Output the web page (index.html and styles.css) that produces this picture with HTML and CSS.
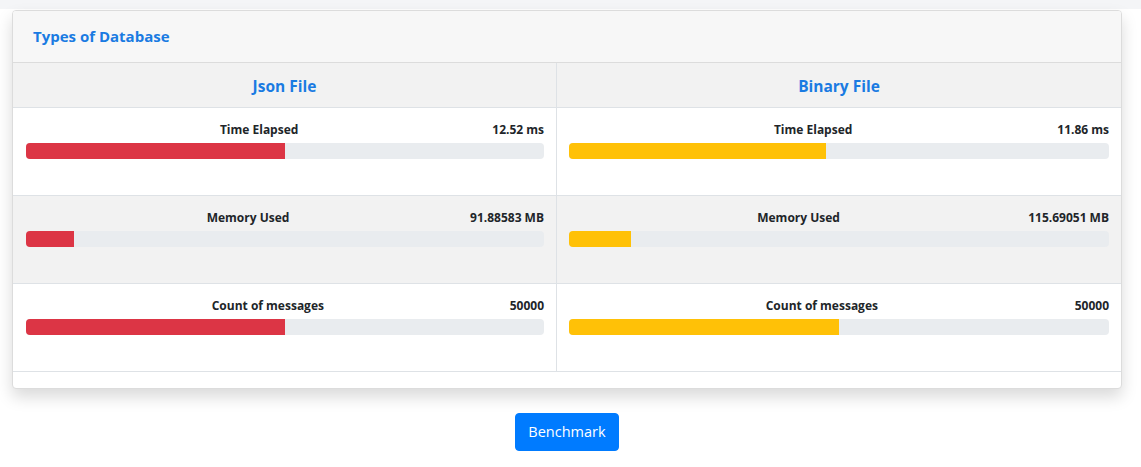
FILE: index.html
```html
<!DOCTYPE html>
<html lang="en">
<head>
<meta charset="utf-8">
<title>Types of Database</title>
<link rel="stylesheet" href="styles.css">
</head>
<body>
<div class="topbar"></div>
<main class="page">
  <section class="card">
    <header class="card-header">
      <h2 class="card-title">Types of Database</h2>
    </header>
    <div class="grid">
      <div class="head-cell col-left">Json File</div>
      <div class="head-cell">Binary File</div>

      <div class="cell col-left">
        <div class="metric"><span class="label">Time Elapsed</span><span class="value">12.52 ms</span></div>
        <div class="bar"><div class="fill fill-red" style="width:50%"></div></div>
      </div>
      <div class="cell">
        <div class="metric"><span class="label">Time Elapsed</span><span class="value">11.86 ms</span></div>
        <div class="bar"><div class="fill fill-yellow" style="width:47.5%"></div></div>
      </div>

      <div class="cell col-left striped">
        <div class="metric"><span class="label">Memory Used</span><span class="value">91.88583 MB</span></div>
        <div class="bar"><div class="fill fill-red" style="width:9.3%"></div></div>
      </div>
      <div class="cell striped">
        <div class="metric"><span class="label">Memory Used</span><span class="value">115.69051 MB</span></div>
        <div class="bar"><div class="fill fill-yellow" style="width:11.5%"></div></div>
      </div>

      <div class="cell col-left">
        <div class="metric"><span class="label">Count of messages</span><span class="value">50000</span></div>
        <div class="bar"><div class="fill fill-red" style="width:50%"></div></div>
      </div>
      <div class="cell">
        <div class="metric"><span class="label">Count of messages</span><span class="value">50000</span></div>
        <div class="bar"><div class="fill fill-yellow" style="width:50%"></div></div>
      </div>
    </div>
  </section>
  <div class="actions">
    <button class="btn" type="button">Benchmark</button>
  </div>
</main>
</body>
</html>
```

FILE: styles.css
```css
html, body {
  margin: 0;
  padding: 0;
  background: #ffffff;
  font-family: "Open Sans", "Noto Sans", "Liberation Sans", sans-serif;
  color: #212529;
}

.topbar {
  height: 9px;
  background: #f4f5f7;
}

.page {
  padding: 1px 20px 0 12px;
}

.card {
  width: 1110px;
  box-sizing: border-box;
  border: 1px solid #dcdcdc;
  border-radius: 4px;
  background: #ffffff;
  box-shadow: 0 8px 16px rgba(0, 0, 0, 0.15);
  padding-bottom: 16px;
  overflow: hidden;
}

.card-header {
  background: #f7f7f7;
  border-bottom: 1px solid #dcdcdc;
  padding: 15px 20px;
}

.card-title {
  margin: 0;
  font-size: 15px;
  line-height: 21px;
  font-weight: 700;
  color: #1a7be2;
}

.grid {
  display: grid;
  grid-template-columns: 544px 1fr;
  border-bottom: 1px solid #dee2e6;
}

.head-cell {
  background: #f2f2f2;
  border-bottom: 1px solid #dee2e6;
  text-align: center;
  font-size: 15.5px;
  font-weight: 700;
  line-height: 22px;
  padding: 12px 12px 10px;
  color: #1a7be2;
}

.col-left {
  border-right: 1px solid #dee2e6;
}

.cell {
  padding: 11px 12px 36px 12px;
  border-bottom: 1px solid #dee2e6;
}

.cell.col-left {
  padding-left: 13px;
}

.grid > .cell:nth-last-child(-n+2) {
  border-bottom: none;
}

.cell.striped {
  background: #f2f2f2;
}

.metric {
  display: flex;
  align-items: center;
  height: 20px;
  font-size: 12px;
  font-weight: 700;
  color: #212529;
}

.label {
  flex: 1;
  text-align: center;
}

.bar {
  margin-top: 4px;
  height: 16px;
  background: #e9ecef;
  border-radius: 4px;
  overflow: hidden;
  display: flex;
}

.fill {
  height: 100%;
}

.fill-red {
  background: #dc3545;
}

.fill-yellow {
  background: #ffc107;
}

.actions {
  width: 1110px;
  display: flex;
  justify-content: center;
  padding-top: 24px;
}

.btn {
  font-family: "Open Sans", "Noto Sans", "Liberation Sans", sans-serif;
  font-size: 14.5px;
  line-height: 24px;
  padding: 6px 12px;
  color: #ffffff;
  background: #007bff;
  border: 1px solid #007bff;
  border-radius: 4px;
  cursor: pointer;
}
```
